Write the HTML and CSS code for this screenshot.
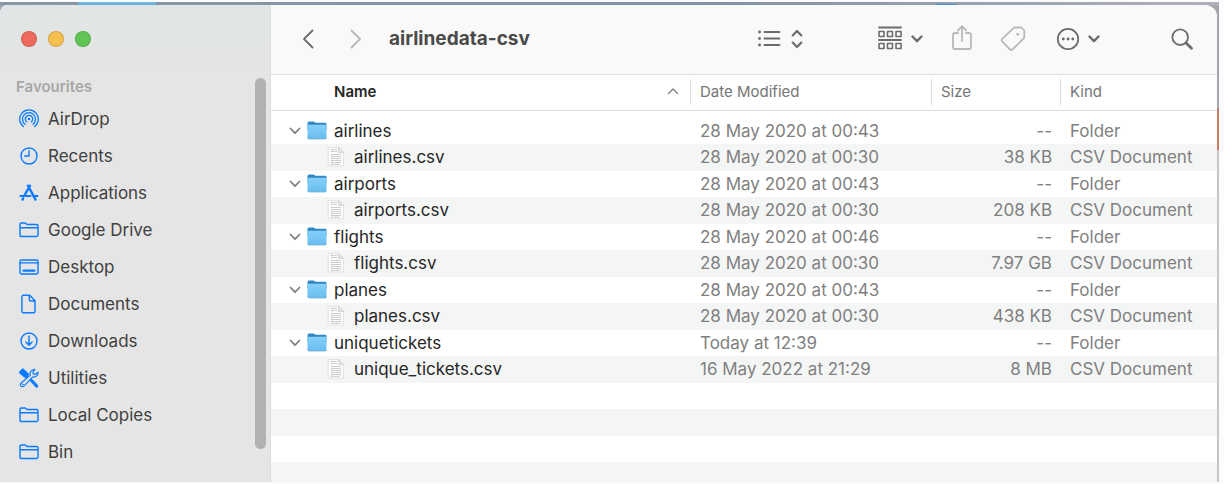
FILE: index.html
```html
<!DOCTYPE html>
<html lang="en-GB">
<head>
<meta charset="utf-8">
<title>airlinedata-csv</title>
<link rel="stylesheet" href="styles.css">
</head>
<body>
<svg class="sprites" aria-hidden="true">
  <defs>
    <linearGradient id="folder-front" x1="0" y1="0" x2="0" y2="1"><stop offset="0" stop-color="#86d0fa"/><stop offset="1" stop-color="#69bdf0"/></linearGradient>
  </defs>
  <symbol id="folder-outline" viewBox="0 0 20 16"><path d="M1 3.200V2.400Q1 1 2.400 1h3.400q.7 0 1.200.5l.6.6q.5.4 1.200.4h8.800q1.400 0 1.400 1.400v9.200q0 1.400-1.400 1.400H2.400Q1 14.500 1 13.100zM1 5.700h18"/></symbol>
  <symbol id="folder" viewBox="0 0 20 19"><path d="M.5 2Q.5.500 2 .500h4.200q.8 0 1.400.5l.8.700h9.800q1.300 0 1.300 1.300v6H.500z" fill="#2f87c4"/><path d="M.5 4.500q0-.8.8-.8h17.400q.8 0 .8.8v12q0 1.300-1.300 1.300H1.800Q.500 17.800.500 16.500z" fill="url(#folder-front)"/><path d="M.7 17.100q.4.800 1.200.8h16.200q.8 0 1.200-.8" fill="none" stroke="#4f9dcc" stroke-width=".8"/></symbol>
  <symbol id="file" viewBox="0 0 18 20"><path d="M1.500.500H11.500l5 5v13.500h-15z" fill="#fbfbfb" stroke="#dedede" stroke-width=".8"/><path d="M11.500.500v5h5z" fill="#e4e4e4" stroke="#c4c4c4" stroke-width=".6"/><path d="M4 2.500h6M4 4.500h6M4 7.500h10M4 9.500h10M4 11.500h10M4 13.500h10M4 15.500h10M4 17.300h9" stroke="#bcbcbc" stroke-width=".9" stroke-linecap="butt" stroke-dasharray="2.600 .5 1.600 .5"/></symbol>
  <symbol id="down" viewBox="0 0 12 8"><path d="M1.500 1.500 6 6.200l4.500-4.700"/></symbol>
</svg>
<div class="desktop">
  <div class="window">
    <aside class="sidebar">
      <div class="places">
        <div class="lights">
          <button class="light close" aria-label="Close"></button>
          <button class="light minimise" aria-label="Minimise"></button>
          <button class="light zoom" aria-label="Zoom"></button>
        </div>
        <h2 class="heading">Favourites</h2>
        <nav class="nav">
          <a href="#airdrop"><svg class="line thin" viewBox="0 0 20 20"><circle cx="10" cy="10" r="1.300" fill="currentColor" stroke="none"/><path d="M7.700 12.900a3.700 3.700 0 1 1 4.600 0M6 15.200a6.500 6.500 0 1 1 8 0M4.300 17.500a9.300 9.300 0 1 1 11.400 0"/></svg>AirDrop</a>
          <a href="#recents"><svg class="line" viewBox="0 0 20 20"><circle cx="10" cy="10" r="8"/><path d="M10 4.800V10H5.600"/></svg>Recents</a>
          <a href="#applications"><svg class="line" viewBox="0 0 20 20"><g stroke-width="2.300"><path d="M11 2.600 5.700 12M4.200 15.300l-.7 1.300M9 2.600l7.500 14"/></g><path d="M1.500 12.900h10M14.500 12.900h4" stroke-width="2"/></svg>Applications</a>
          <a href="#google-drive"><svg class="line wide"><use href="#folder-outline"/></svg>Google Drive</a>
          <a href="#desktop"><svg class="line wide" viewBox="0 0 20 16"><rect x="1" y="1" width="18" height="14" rx="1.400"/><path d="M1 3.900h18"/><path d="M4.500 11.600h11" stroke-width="2.200"/></svg>Desktop</a>
          <a href="#documents"><svg class="line" viewBox="0 0 20 20"><path d="M4.400 1.300h6.300l5.300 5.400v10.500q0 1.500-1.500 1.500H4.400q-1.500 0-1.500-1.500V2.800q0-1.500 1.500-1.500zM10.300 1.500v4.200q0 1.300 1.300 1.300h4.200"/></svg>Documents</a>
          <a href="#downloads"><svg class="line" viewBox="0 0 20 20"><circle cx="10" cy="10" r="8"/><path d="M10 5.300v8.800M6.900 11.100l3.100 3.100 3.100-3.100"/></svg>Downloads</a>
          <a href="#utilities"><svg class="line" viewBox="0 0 20 20"><path d="M1.200 3.400 3.800 1l5.700 5.200-2.900 3.600L.8 4.800z" fill="currentColor"/><path d="m13 13 4.600 5" stroke-width="3.200"/><path d="M8.500 8.500l4 4" stroke-width="2"/><path d="m2 15.200 9.300-8.100c-.6-2.300.3-5.600 4.700-5.800L13.900 4l.3 1.900 1.900.4L19 4.200c.2 3.400-2.800 5.500-5.300 4.600l-8.500 9c-2.300 2.500-5.300-.8-3.200-2.600z" fill="#e5e5e5" stroke-width="1.200"/><circle cx="3.800" cy="16.400" r=".4" stroke-width=".8"/></svg>Utilities</a>
          <a href="#local-copies"><svg class="line wide"><use href="#folder-outline"/></svg>Local Copies</a>
          <a href="#bin"><svg class="line wide"><use href="#folder-outline"/></svg>Bin</a>
        </nav>
      </div>
      <div class="scrollbar"></div>
    </aside>
    <main class="content">
      <header class="toolbar">
        <button class="tool back" aria-label="Back"><svg width="12" height="20"><path d="M10.500 1.500 2 10l8.500 8.500"/></svg></button>
        <button class="tool forward" aria-label="Forward"><svg width="12" height="20"><path d="m1.500 1.500 8.500 8.500-8.500 8.500"/></svg></button>
        <h1 class="title">airlinedata-csv</h1>
        <button class="tool view" aria-label="View as list"><svg width="24" height="20"><path d="M7.500 3h15M7.500 9.500h15M7.500 16h15"/><path d="M2.500 3h.1M2.500 9.500h.1M2.500 16h.1" stroke-width="2.800"/></svg><svg width="12" height="20"><path d="M1.700 6.400 6 2l4.300 4.400M1.700 13.600 6 18l4.300-4.400" stroke-width="2.200"/></svg></button>
        <button class="tool group" aria-label="Group items"><svg width="26" height="26"><path d="M2 1.500h22M2 14h22"/><path d="M2 5.500h5v5H2zM10.500 5.500h5v5h-5zM19 5.500h5v5h-5zM2 17.500h5v5H2zM10.500 17.500h5v5h-5zM19 17.500h5v5h-5z" stroke-width="1.600"/></svg><svg class="heavy" width="12" height="8"><use href="#down"/></svg></button>
        <button class="tool share" aria-label="Share" disabled><svg width="22" height="28"><path d="M7 8H4Q2 8 2 10v12q0 2 2 2h14q2 0 2-2V10q0-2-2-2h-3M11 16V1.500M6.700 5.600 11 1.200l4.300 4.400"/></svg></button>
        <button class="tool tag" aria-label="Edit tags" disabled><svg width="26" height="26"><path d="M15.200 1.500h6.300l2.800 3v6.300q0 1-.7 1.700L12.500 23.500q-1.200 1-2.400 0l-8-8.200q-1-1.200 0-2.400L13.500 2.200q.7-.7 1.700-.7z"/><circle cx="17.800" cy="8.200" r="1.400" fill="currentColor" stroke="none"/></svg></button>
        <button class="tool actions" aria-label="Actions"><svg width="24" height="24"><circle cx="12" cy="12" r="10.200"/><path d="M7.200 12h.1M12 12h.1M16.800 12h.1" stroke-width="2.800"/></svg><svg class="heavy" width="12" height="8"><use href="#down"/></svg></button>
        <button class="tool search" aria-label="Search"><svg width="24" height="24"><circle cx="10.200" cy="10.200" r="7.800"/><path d="m16 16 5.500 5.300" stroke-width="2.800"/></svg></button>
      </header>
      <div class="list">
        <table class="files">
          <thead>
            <tr><th class="name" scope="col"><div class="label">Name<svg class="sort" width="12" height="8"><path d="M1.500 6.500 6 2l4.500 4.500"/></svg></div></th><th class="date" scope="col"><div class="label">Date Modified</div></th><th class="size" scope="col"><div class="label">Size</div></th><th class="kind" scope="col"><div class="label">Kind</div></th></tr>
          </thead>
          <tbody>
            <tr><td><div class="entry"><svg class="twist"><use href="#down"/></svg><svg class="pic"><use href="#folder"/></svg>airlines</div></td><td>28 May 2020 at 00:43</td><td>--</td><td>Folder</td></tr>
            <tr><td><div class="entry child"><svg class="doc"><use href="#file"/></svg>airlines.csv</div></td><td>28 May 2020 at 00:30</td><td>38 KB</td><td>CSV Document</td></tr>
            <tr><td><div class="entry"><svg class="twist"><use href="#down"/></svg><svg class="pic"><use href="#folder"/></svg>airports</div></td><td>28 May 2020 at 00:43</td><td>--</td><td>Folder</td></tr>
            <tr><td><div class="entry child"><svg class="doc"><use href="#file"/></svg>airports.csv</div></td><td>28 May 2020 at 00:30</td><td>208 KB</td><td>CSV Document</td></tr>
            <tr><td><div class="entry"><svg class="twist"><use href="#down"/></svg><svg class="pic"><use href="#folder"/></svg>flights</div></td><td>28 May 2020 at 00:46</td><td>--</td><td>Folder</td></tr>
            <tr><td><div class="entry child"><svg class="doc"><use href="#file"/></svg>flights.csv</div></td><td>28 May 2020 at 00:30</td><td>7.97 GB</td><td>CSV Document</td></tr>
            <tr><td><div class="entry"><svg class="twist"><use href="#down"/></svg><svg class="pic"><use href="#folder"/></svg>planes</div></td><td>28 May 2020 at 00:43</td><td>--</td><td>Folder</td></tr>
            <tr><td><div class="entry child"><svg class="doc"><use href="#file"/></svg>planes.csv</div></td><td>28 May 2020 at 00:30</td><td>438 KB</td><td>CSV Document</td></tr>
            <tr><td><div class="entry"><svg class="twist"><use href="#down"/></svg><svg class="pic"><use href="#folder"/></svg>uniquetickets</div></td><td>Today at 12:39</td><td>--</td><td>Folder</td></tr>
            <tr><td><div class="entry child"><svg class="doc"><use href="#file"/></svg>unique_tickets.csv</div></td><td>16 May 2022 at 21:29</td><td>8 MB</td><td>CSV Document</td></tr>
          </tbody>
        </table>
        <div class="blank"></div>
      </div>
    </main>
  </div>
</div>
</body>
</html>
```
FILE: styles.css
```css
* { box-sizing: border-box; }
body {
  margin: 0;
  padding: 2px 5px 2px 0;
  height: 100vh;
  overflow: hidden;
  background: #fcfcff;
  font-family: Inter, "Liberation Sans", sans-serif;
  font-size: 17px;
  color: #262626;
}
.sprites { position: absolute; width: 0; height: 0; }
.desktop {
  height: 100%;
  padding: 3px 2px 0 0;
  background:
    linear-gradient(#7cbfe6, #62a8d0) 78px 0 / 78px 3px no-repeat,
    linear-gradient(#4a90c8, #4a90c8) 936px 2px / 21px 1px no-repeat,
    linear-gradient(90deg, #8796a8, #8493a6 60%, #b0b0ba) 0 0 / 100% 3px no-repeat,
    linear-gradient(#a5a5ad 0 106px, #c97b66 106px 148px, #c6c6c8 148px);
}
.window {
  display: flex;
  height: 100%;
  overflow: hidden;
  border-radius: 8px 12px 0 0;
  background: #fff;
}
.sidebar {
  flex: none;
  display: flex;
  width: 271px;
  border-right: 1px solid #dcdcdc;
  background: linear-gradient(#e0e6e6, #e4e5e4 60px, #e5e5e4 120px, #e5e5e5 140px);
}
.places { flex: 1; padding: 26px 0 0 16px; }
.scrollbar {
  width: 11px;
  height: 371px;
  margin: 73px 4px 0 0;
  border-radius: 6px;
  background: #b2b2b2;
}
.lights { display: flex; gap: 11px; padding-left: 5px; }
.light { width: 16px; height: 16px; padding: 0; border: 1px solid #0002; border-radius: 50%; }
.close { background: #ee6a5f; }
.minimise { background: #f5bf4f; }
.zoom { background: #61c554; }
.heading { margin: 30px 0 3px; font-size: 15px; line-height: 20px; font-weight: 600; color: #a8a8a8; }
.nav a {
  display: flex;
  align-items: center;
  gap: 9px;
  height: 37px;
  padding-left: 3px;
  color: #404040;
  text-decoration: none;
}
svg { flex: none; fill: none; stroke: currentColor; stroke-width: 2; stroke-linecap: round; stroke-linejoin: round; }
svg.line { width: 20px; height: 20px; color: #0a7aff; stroke-width: 1.4; }
svg.thin { stroke-width: 1.3; }
svg.wide { height: 16px; }
.content { flex: 1; min-width: 0; display: flex; flex-direction: column; }
.toolbar {
  display: flex;
  align-items: center;
  height: 70px;
  padding: 0 23px 2px 31px;
  border-bottom: 1px solid #dedede;
  background: #f9f9f9;
}
.tool { display: flex; align-items: center; padding: 0; border: 0; background: none; color: #6c6c6c; }
.tool svg { stroke-width: 1.8; }
.tool:disabled, .forward { color: #b9b9b9; }
.back { margin-right: 36px; }
.forward { margin-right: 27px; }
.title { flex: 1; margin: 0; font-size: 19px; line-height: 24px; font-weight: 700; color: #4a4a4a; }
.view { gap: 10px; margin-right: 74px; }
.group { gap: 8px; margin-right: 28px; }
.share { margin-right: 27px; }
.tag { margin-right: 30px; }
.actions { gap: 8px; margin-right: 70px; }
.tool .heavy { stroke-width: 2.4; }
.list { flex: 1; min-height: 0; display: flex; flex-direction: column; overflow: hidden; }
.files { flex: none; width: 100%; table-layout: fixed; border-collapse: collapse; }
th { height: 35px; padding: 0; border-bottom: 1px solid #dedede; font-size: 15px; font-weight: 400; text-align: left; color: #757575; }
.date { width: 241px; }
.size { width: 129px; }
.kind { width: 157px; }
.label { display: flex; align-items: center; height: 26px; padding: 0 0 2px 9px; border-left: 1px solid #dedede; }
.name .label { justify-content: space-between; padding: 0 11px 2px 63px; border: 0; font-weight: 600; color: #262626; }
.sort { color: #808080; stroke-width: 1.4; }
tbody::before { content: ""; display: block; height: 7px; }
td { height: 26px; padding: 0 0 0 10px; line-height: 20px; color: #808080; white-space: nowrap; }
tr:nth-child(even) td { height: 27px; background: #f4f5f5; }
td:first-child { padding: 0; color: #262626; }
td:nth-child(3) { padding: 0 8px 0 0; text-align: right; }
.entry { display: flex; align-items: center; padding-left: 18px; }
.child { padding-left: 56px; }
.twist { width: 12px; height: 8px; margin-right: 6px; color: #808080; stroke-width: 1.8; }
.pic { width: 20px; height: 19px; margin-right: 7px; stroke: none; }
.doc { width: 18px; height: 20px; margin-right: 9px; }
.blank { flex: 1; background: repeating-linear-gradient(#fff 0 26px, #f4f5f5 26px 53px); }
```
